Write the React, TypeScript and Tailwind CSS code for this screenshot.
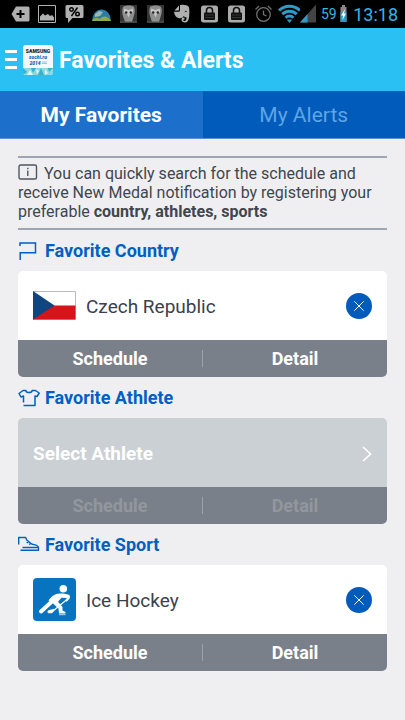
import React, { useState } from 'react';

const StatusBar: React.FC = () => (
  <div className="flex h-7 items-center overflow-hidden bg-black px-[7px] text-[#33b5e5]">
    <div className="flex shrink-0 items-center text-[#b0b0b0]">
      {/* Add tag */}
      <svg className="h-7 w-[27px]" viewBox="0 0 27 28" fill="currentColor">
        <path d="M4.5 14 9 6.5h12a1.5 1.5 0 0 1 1.5 1.5v12a1.5 1.5 0 0 1-1.5 1.5H9z" />
        <path d="M13.5 10v8M9.5 14h8" stroke="#000" strokeWidth="2" />
      </svg>
      {/* Gallery */}
      <svg className="h-7 w-[27px]" viewBox="0 0 27 28" fill="currentColor">
        <path d="M4.5 5.5h17v17h-17z" fill="none" stroke="currentColor" />
        <path d="M6 20.5v-4l3-3 2 2 3-1.5 2 2 2-1 2 2.5v3z" />
      </svg>
      {/* Percent bubble */}
      <svg className="h-7 w-[27px]" viewBox="0 0 27 28" fill="currentColor">
        <path d="M6 5h15a1.5 1.5 0 0 1 1.5 1.5v10A1.5 1.5 0 0 1 21 18H11.5L7 23v-5H6a1.5 1.5 0 0 1-1.5-1.5v-10A1.5 1.5 0 0 1 6 5z" />
        <g fill="none" stroke="#000" strokeWidth="1.4">
          <circle cx="10.5" cy="9.5" r="1.8" />
          <circle cx="16.5" cy="14" r="1.8" />
          <path d="M16.5 7.5l-6 8.5" />
        </g>
      </svg>
      {/* Weather globe */}
      <svg className="h-7 w-[27px]" viewBox="0 0 27 28">
        <path d="M4 21a9.5 11.5 0 0 1 19 0z" fill="#2c7da6" />
        <path d="M7 14l4-3 4 1-3 4-5 1z" fill="#9ab8b4" />
        <path d="M4 21c2-4 5-3 8-2 3-4 8-3 11 2z" fill="#91a948" />
      </svg>
      <OwlIcon />
      <OwlIcon />
      {/* Elephant */}
      <svg className="h-7 w-[27px]" viewBox="0 0 27 28" fill="currentColor">
        <path d="M10 5.5 5.5 10.5H9c.8 0 1-.3 1-1zM11 5c4-.8 7 .2 8.5 1.5 1 1.5 1.2 6 .5 11-.5 3.5-1.7 5-4 5-2 0-3.5-1-3.5-2.7 0-1.7 1.3-2.5 3-2.2v1.800c-1 0-1.3.3-1.3.8s.7.9 1.7.8c1.5-.2 1.7-2 1.5-3.7-1 0-2-.2-2.7-1.2-1 2-2.5 2.4-4.5 2.1-3-.5-4.7-3-5.2-6.500h4.5c1 0 1.5-.6 1.5-1.5z" />
        <path d="M15.8 11.8c.7-.7 1.5-.6 2 .2" stroke="#000" fill="none" />
      </svg>
      <LockIcon />
      <LockIcon />
      {/* Alarm */}
      <svg className="h-7 w-[27px] text-[#707070]" viewBox="0 0 27 28" fill="none" stroke="currentColor" strokeWidth="1.3">
        <circle cx="13.5" cy="14.5" r="6.8" />
        <path d="M13.5 10.5v4l3 1.5M5.5 9.5 9 6M21.5 9.5 18 6" />
      </svg>
      {/* Wifi */}
      <svg className="h-7 w-[23px] text-[#2f9ac3]" viewBox="1 0 23 28" fill="none" stroke="currentColor" strokeWidth="3">
        <path d="M3 10.5a15 15 0 0 1 21 0M6.2 14.2a10.5 10.5 0 0 1 14.6 0M9.6 17.7a5.5 5.5 0 0 1 7.8 0" />
        <path d="M13.5 23l-2.8-3.6h5.6z" fill="currentColor" stroke="none" />
      </svg>
    </div>
    {/* Signal */}
    <svg className="h-7 w-4 shrink-0" viewBox="0 0 16 28">
      <path d="M16 4.5v18H0z" fill="#444" />
      <path d="M7.5 14v8.5H0z" fill="#2f9ac3" />
    </svg>
    <span className="ml-[5px] text-sm">59</span>
    {/* Battery */}
    <svg className="ml-[3px] h-7 w-[7px] shrink-0" viewBox="0 0 7 28">
      <path d="M2 5h3v2h1.5v15h-6V7H2z" fill="#888" />
      <path d="M.5 12h6v10h-6z" fill="#2f9ac3" />
      <path d="M5 9 1 15.5h2L2.5 20 6 13.5H4z" fill="#fff" />
    </svg>
    <span className="ml-auto pt-[2px] text-lg">13:18</span>
  </div>
);

const OwlIcon: React.FC = () => (
  <svg className="h-7 w-[27px]" viewBox="0 0 27 28">
    <path d="M5 5h17v18H5z" fill="#343434" />
    <path d="M8 7c2-2 9-2 11 0 1.5 3 .5 8-.5 10L17 22h-7l-2-6c-1-3-1-6 0-9z" fill="#8f8f8f" />
    <path d="M9 8.5l4.5 1.5L18 8.5V12l-3 2-1.5 3.5L12 14l-3-2z" fill="#c5c5c5" />
    <circle cx="11.2" cy="12.5" r="1.2" fill="#222" />
    <circle cx="15.8" cy="12.5" r="1.2" fill="#222" />
    <path d="M5 21.5h17v1H5z" fill="#555" />
  </svg>
);

const LockIcon: React.FC = () => (
  <svg className="h-7 w-[27px]" viewBox="0 0 27 28">
    <rect x="5" y="5.5" width="17" height="17" rx="2.5" fill="#aaa" />
    <rect x="8" y="12.5" width="11" height="7.5" rx="1" fill="#111" />
    <path d="M10.5 13v-2.5a3 3 0 0 1 6 0V13" fill="none" stroke="#111" strokeWidth="1.5" />
    <path d="M9 15h9M9 17.5h9" stroke="#444" strokeWidth=".7" />
  </svg>
);

const SochiLogo: React.FC = () => (
  <svg className="h-[30px] w-[30px]" viewBox="0 0 30 30">
    <clipPath id="logo-clip">
      <rect width="30" height="30" rx="3" />
    </clipPath>
    <g clipPath="url(#logo-clip)">
      <path d="M0 0h30v30H0z" fill="#f6f9fb" />
      <path d="M0 23h30v7H0z" fill="#8dd7df" />
      <path d="M0 23l4 4-4 3zM8 23h5l-3 5zM18 23l3 7h-6zM25 23h5l-4 4z" fill="#35b3cb" />
      <path d="M4 30l3-5 3 5zM13 24l3 2-2 3zM22 24l3 4-3 2z" fill="#dff4f5" />
    </g>
    <g fontFamily="Roboto, sans-serif" fontWeight="900" textAnchor="middle">
      <text x="15" y="8" fontSize="5" fill="#222">SAMSUNG</text>
      <text x="15" y="14" fontSize="5" fontStyle="italic" fill="#0869bd">sochi.ru</text>
      <text x="12" y="20" fontSize="5" fontStyle="italic" fill="#0869bd">2014</text>
    </g>
    <path d="M19 17h5M19 18.5h5" stroke="#7dbbe0" strokeWidth=".8" />
  </svg>
);

const FlagIcon: React.FC = () => (
  <svg className="h-5 w-[22px] shrink-0" viewBox="0 0 22 20" fill="none" stroke="#005fc2" strokeWidth="1.5">
    <path d="M2 5V2h15.500v9.700H2.200V19" />
  </svg>
);

const ShirtIcon: React.FC = () => (
  <svg className="h-5 w-[22px] shrink-0" viewBox="0 0 22 20" fill="none" stroke="#005fc2" strokeWidth="1.5" strokeLinejoin="round">
    <path d="M5.500 17.500H17V8l2 .5L21.200 5 17.500 2.500h-3.300C13.500 5.300 8.500 5.300 7.800 2.500H5L1 5.500 3 9l2.500-1v6.500" />
  </svg>
);

const SkateIcon: React.FC = () => (
  <svg className="h-5 w-[22px] shrink-0" viewBox="0 0 22 20" fill="none" stroke="#005fc2" strokeWidth="1.4" strokeLinejoin="round">
    <path d="M.7 9.500v-7h7l1 2.500L14 9.200c3 .6 6 .8 6.500 3.300h-16M2.500 15.200h18v-2.700M8.700 7.800l2-1.200M11 9.500l2-1.200" />
  </svg>
);

const CzechFlag: React.FC = () => (
  <svg className="h-[29px] w-[43px]" viewBox="0 0 43 29">
    <path d="M.5.5h42v28H.5z" fill="#fff" stroke="#bbb" />
    <path d="M0 14.5h42.500v14H0z" fill="#d7141a" />
    <path d="M0 0l21.500 14.500L0 28.500z" fill="#11457e" />
  </svg>
);

const HockeyIcon: React.FC = () => (
  <svg className="h-[43px] w-[43px]" viewBox="0 0 43 43">
    <rect width="43" height="43" rx="4" fill="#0874bf" />
    <circle cx="30.3" cy="10.7" r="3.8" fill="#fff" />
    <path d="M8 33.500 20.500 22" stroke="#fff" strokeWidth="4" strokeLinecap="round" />
    <path d="M15.500 22.500c3-4.500 7-7.500 12.500-7 4.500.3 8.500.8 9 2.800.3 2-1.500 4-3.500 5.500l-1.500-1.300 2-2.500-5.500-.2-3.500 4 4.500 5.200v3.500l3 1.500v1.500h-6.500l-.5-5-6-5.500z" fill="#fff" />
    <path d="M34.500 21 20 33" stroke="#fff" strokeWidth="1.2" />
    <path d="M15.500 32.200c2-1 4-.7 5.500-1.500l.7 1.500-2.700 3h-3.500c-1.200-.5-1.500-2 0-3z" fill="#fff" />
    <path d="M26 36.700h6.500" stroke="#b9d9ee" strokeWidth="1" />
  </svg>
);

interface SectionProps {
  title: string;
  icon: React.ReactNode;
  disabled?: boolean;
  children: React.ReactNode;
}

const FavoriteSection: React.FC<SectionProps> = ({ title, icon, disabled = false, children }) => (
  <section>
    <h2 className="flex h-[41px] items-center gap-[5px] text-lg font-bold text-[#005fc2]">
      {icon}
      {title}
    </h2>
    <div className="overflow-hidden rounded-[5px]">
      {children}
      <div className={`flex h-[37px] items-center bg-[#7a808a] text-lg font-bold ${disabled ? 'text-[#92979d]' : 'text-white'}`}>
        <button type="button" disabled={disabled} className="h-full flex-1">Schedule</button>
        <span className="h-[17px] w-px bg-[#9da1a8]" />
        <button type="button" disabled={disabled} className="h-full flex-1">Detail</button>
      </div>
    </div>
  </section>
);

interface FavoriteRowProps {
  name: string;
  picture: React.ReactNode;
}

const FavoriteRow: React.FC<FavoriteRowProps> = ({ name, picture }) => (
  <div className="flex h-[69px] items-center gap-[10px] bg-white px-[15px]">
    {picture}
    <span className="flex-1 pt-[3px] text-[19px] text-[#3b414b]">{name}</span>
    <button
      type="button"
      aria-label={`Remove ${name}`}
      className="flex h-[26px] w-[26px] items-center justify-center rounded-full bg-[#005bbb]"
    >
      <svg className="h-[10px] w-[10px]" viewBox="0 0 10 10" stroke="#fff" strokeWidth="1">
        <path d="M.3.3l9.4 9.4M9.700.3.3 9.700" />
      </svg>
    </button>
  </div>
);

const App: React.FC = () => {
  const [tab, setTab] = useState<'favorites' | 'alerts'>('favorites');

  const tabClass = (active: boolean) =>
    active ? 'bg-[#1c6fcb] font-bold text-white' : 'bg-[#005bbb] text-[#5ea5e6]';

  return (
    <div className="min-h-screen bg-[#efeff1] font-['Roboto',sans-serif]">
      <StatusBar />
      <header className="flex h-[63px] items-center bg-[#2bc0f3] pl-[5px]">
        <button type="button" aria-label="Menu" className="flex w-3 flex-col gap-[5px]">
          <span className="h-[3px] bg-white" />
          <span className="h-[3px] bg-white" />
          <span className="h-[3px] bg-white" />
        </button>
        <div className="ml-[6px]">
          <SochiLogo />
        </div>
        <h1 className="ml-[6px] pt-[3px] text-[23px] font-bold text-white">Favorites &amp; Alerts</h1>
      </header>

      <nav className="flex h-12 border-b border-[#5b94d3] text-[21px]">
        <button type="button" className={`flex-1 pt-[3px] ${tabClass(tab === 'favorites')}`} onClick={() => setTab('favorites')}>
          My Favorites
        </button>
        <button type="button" className={`flex-1 pt-[3px] ${tabClass(tab === 'alerts')}`} onClick={() => setTab('alerts')}>
          My Alerts
        </button>
      </nav>

      <main className="px-[18px] pb-12 pt-[17px]">
        <p className="border-y-2 border-[#a0a6b0] pb-[7px] pt-[6px] text-base leading-[19px] text-[#3f464f]">
          <svg className="mr-[6px] inline h-4 w-5 align-[-1px]" viewBox="0 0 20 16" fill="none" stroke="#50565f" strokeWidth="1.4">
            <rect x="1" y="1" width="17.5" height="14" rx="1.5" />
            <path d="M9.800 6.500V12M9.800 3.700v1.500" />
          </svg>
          You can quickly search for the schedule and receive New Medal notification by registering your preferable{' '}
          <b>country, athletes, sports</b>
        </p>

        <FavoriteSection title="Favorite Country" icon={<FlagIcon />}>
          <FavoriteRow name="Czech Republic" picture={<CzechFlag />} />
        </FavoriteSection>

        <FavoriteSection title="Favorite Athlete" icon={<ShirtIcon />} disabled>
          <button
            type="button"
            className="flex h-[69px] w-full items-center justify-between bg-[#cbd0d4] px-[15px] pt-[3px] text-[19px] font-bold text-white"
          >
            Select Athlete
            <svg className="h-4 w-[10px]" viewBox="0 0 10 16" fill="none" stroke="#fff" strokeWidth="1.6">
              <path d="M1 1l7.500 7L1 15" />
            </svg>
          </button>
        </FavoriteSection>

        <FavoriteSection title="Favorite Sport" icon={<SkateIcon />}>
          <FavoriteRow name="Ice Hockey" picture={<HockeyIcon />} />
        </FavoriteSection>
      </main>
    </div>
  );
};

export default App;
